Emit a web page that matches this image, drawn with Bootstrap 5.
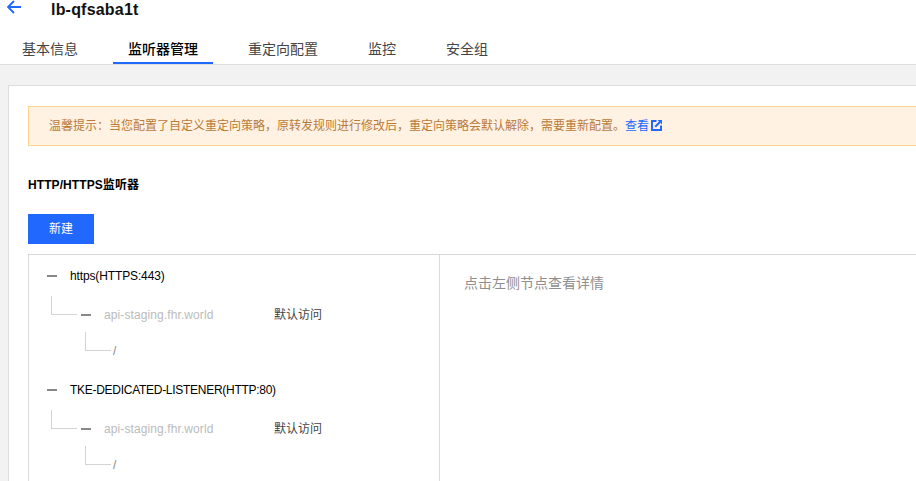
<!doctype html>
<html lang="zh"><head><meta charset="utf-8"><title>lb-qfsaba1t</title>
<link href="https://cdn.jsdelivr.net/npm/bootstrap@5.3.0/dist/css/bootstrap.min.css" rel="stylesheet">
<style>
html,body{height:481px;overflow:hidden}
body{background:#f2f2f2;font-family:"Liberation Sans","Noto Sans CJK SC",sans-serif;font-size:12px;color:#000}
.lb-head{background:#fff;height:65px;border-bottom:1px solid #ddd}
.lb-top{height:21px;padding-left:7px}
.lb-back{width:14px;height:14px}
.lb-title{font-size:16px;font-weight:700;line-height:18px;margin:1px 0 0 30px;color:#111;letter-spacing:.2px}
.lb-tabs{margin-top:11px;padding-left:7px;gap:20px}
.lb-tab{height:32px;padding:0 15px;font-size:14px;line-height:34px;color:#444;border-bottom:2px solid transparent}
.lb-tab.on{color:#000;font-weight:500;border-bottom-color:#2068ff}
.lb-panel{background:#fff;margin:20px 0 0 8px;border:1px solid #ddd;border-width:1px 0 0 1px;padding:20px 0 20px 19px;height:420px}
.lb-tip{height:40px;background:#fff2e3;border:1px solid #ffd28f;border-right:0;color:#b97a3a;line-height:38px;padding-left:20px;font-size:12px}
.lb-tip a{color:#2068ff;text-decoration:none}
.lb-tip svg{width:11px;height:11px;margin-left:2px;vertical-align:-1px}
.lb-sub{font-weight:700;font-size:12px;line-height:16px;margin-top:31px;letter-spacing:.08px}
.lb-new{display:block;background:#2068ff;color:#fff;border:0;border-radius:0;width:66px;height:30px;padding:1px 0 0;line-height:29px;font-size:12px;margin-top:21px}
.lb-new:hover{background:#2068ff;color:#fff}
.lb-box{margin-top:10px;border:1px solid #d9d9d9;border-width:1px 0 0 1px;height:240px}
.lb-left{width:411px;flex:none;border-right:1px solid #d9d9d9;padding-top:2px}
.lb-right{padding:18px 24px;font-size:14px;color:#8f8f8f;line-height:20px}
.lb-row{position:relative;display:flex;align-items:center;line-height:16px}
.lb-row.r1{height:38px;padding-left:18px}
.lb-row.r2{height:40px;padding-left:52px}
.lb-row.r3{height:30px;padding-left:84px}
.lb-gap{margin-top:6px}
.lb-dash{width:10px;height:2px;background:#888;flex:none;margin-right:13px}
.lb-row.r2::before,.lb-row.r3::before{content:"";position:absolute;border-left:1px solid #d4d4d4;border-bottom:1px solid #d4d4d4}
.lb-row.r2::before{left:22px;top:1px;width:26px;height:19px}
.lb-row.r3::before{left:56px;top:-3px;width:26px;height:19px}
.lb-s1{letter-spacing:-.13px}
.lb-s2{letter-spacing:-.28px}
.lb-host{color:#bbb;width:170px;flex:none;letter-spacing:.1px}
.lb-def{color:#444}
.lb-path{color:#888;margin-top:2px}
</style></head>
<body>
<header class="lb-head">
 <div class="lb-top d-flex align-items-start">
  <svg class="lb-back" viewBox="0 0 14 14" fill="none" stroke="#2068ff" stroke-width="1.9"><path d="M1 7H14M7 1L1 7L7 13"/></svg>
  <div class="lb-title">lb-qfsaba1t</div>
 </div>
 <nav class="lb-tabs d-flex">
  <div class="lb-tab">基本信息</div><div class="lb-tab on">监听器管理</div><div class="lb-tab">重定向配置</div><div class="lb-tab">监控</div><div class="lb-tab">安全组</div>
 </nav>
</header>
<main class="lb-panel">
 <div class="lb-tip">温馨提示：当您配置了自定义重定向策略，原转发规则进行修改后，重定向策略会默认解除，需要重新配置。<a href="#">查看<svg viewBox="0 0 11 11"><path fill="none" stroke="#2068ff" stroke-width="2" d="M5.5 1H1V10H10V5.5"/><path fill="none" stroke="#2068ff" stroke-width="2" d="M4.2 6.8L9 2"/><path fill="#2068ff" d="M6.5 0H11V4.5Z"/></svg></a></div>
 <div class="lb-sub">HTTP/HTTPS监听器</div>
 <button class="btn lb-new">新建</button>
 <div class="lb-box d-flex">
  <div class="lb-left">
   <div class="lb-row r1"><i class="lb-dash"></i><span class="lb-s1">https(HTTPS:443)</span></div>
   <div class="lb-row r2"><i class="lb-dash"></i><span class="lb-host">api-staging.fhr.world</span><span class="lb-def">默认访问</span></div>
   <div class="lb-row r3"><span class="lb-path">/</span></div>
   <div class="lb-row r1 lb-gap"><i class="lb-dash"></i><span class="lb-s2">TKE-DEDICATED-LISTENER(HTTP:80)</span></div>
   <div class="lb-row r2"><i class="lb-dash"></i><span class="lb-host">api-staging.fhr.world</span><span class="lb-def">默认访问</span></div>
   <div class="lb-row r3"><span class="lb-path">/</span></div>
  </div>
  <div class="lb-right">点击左侧节点查看详情</div>
 </div>
</main>
<script src="https://cdn.jsdelivr.net/npm/bootstrap@5.3.0/dist/js/bootstrap.bundle.min.js"></script>
</body></html>
